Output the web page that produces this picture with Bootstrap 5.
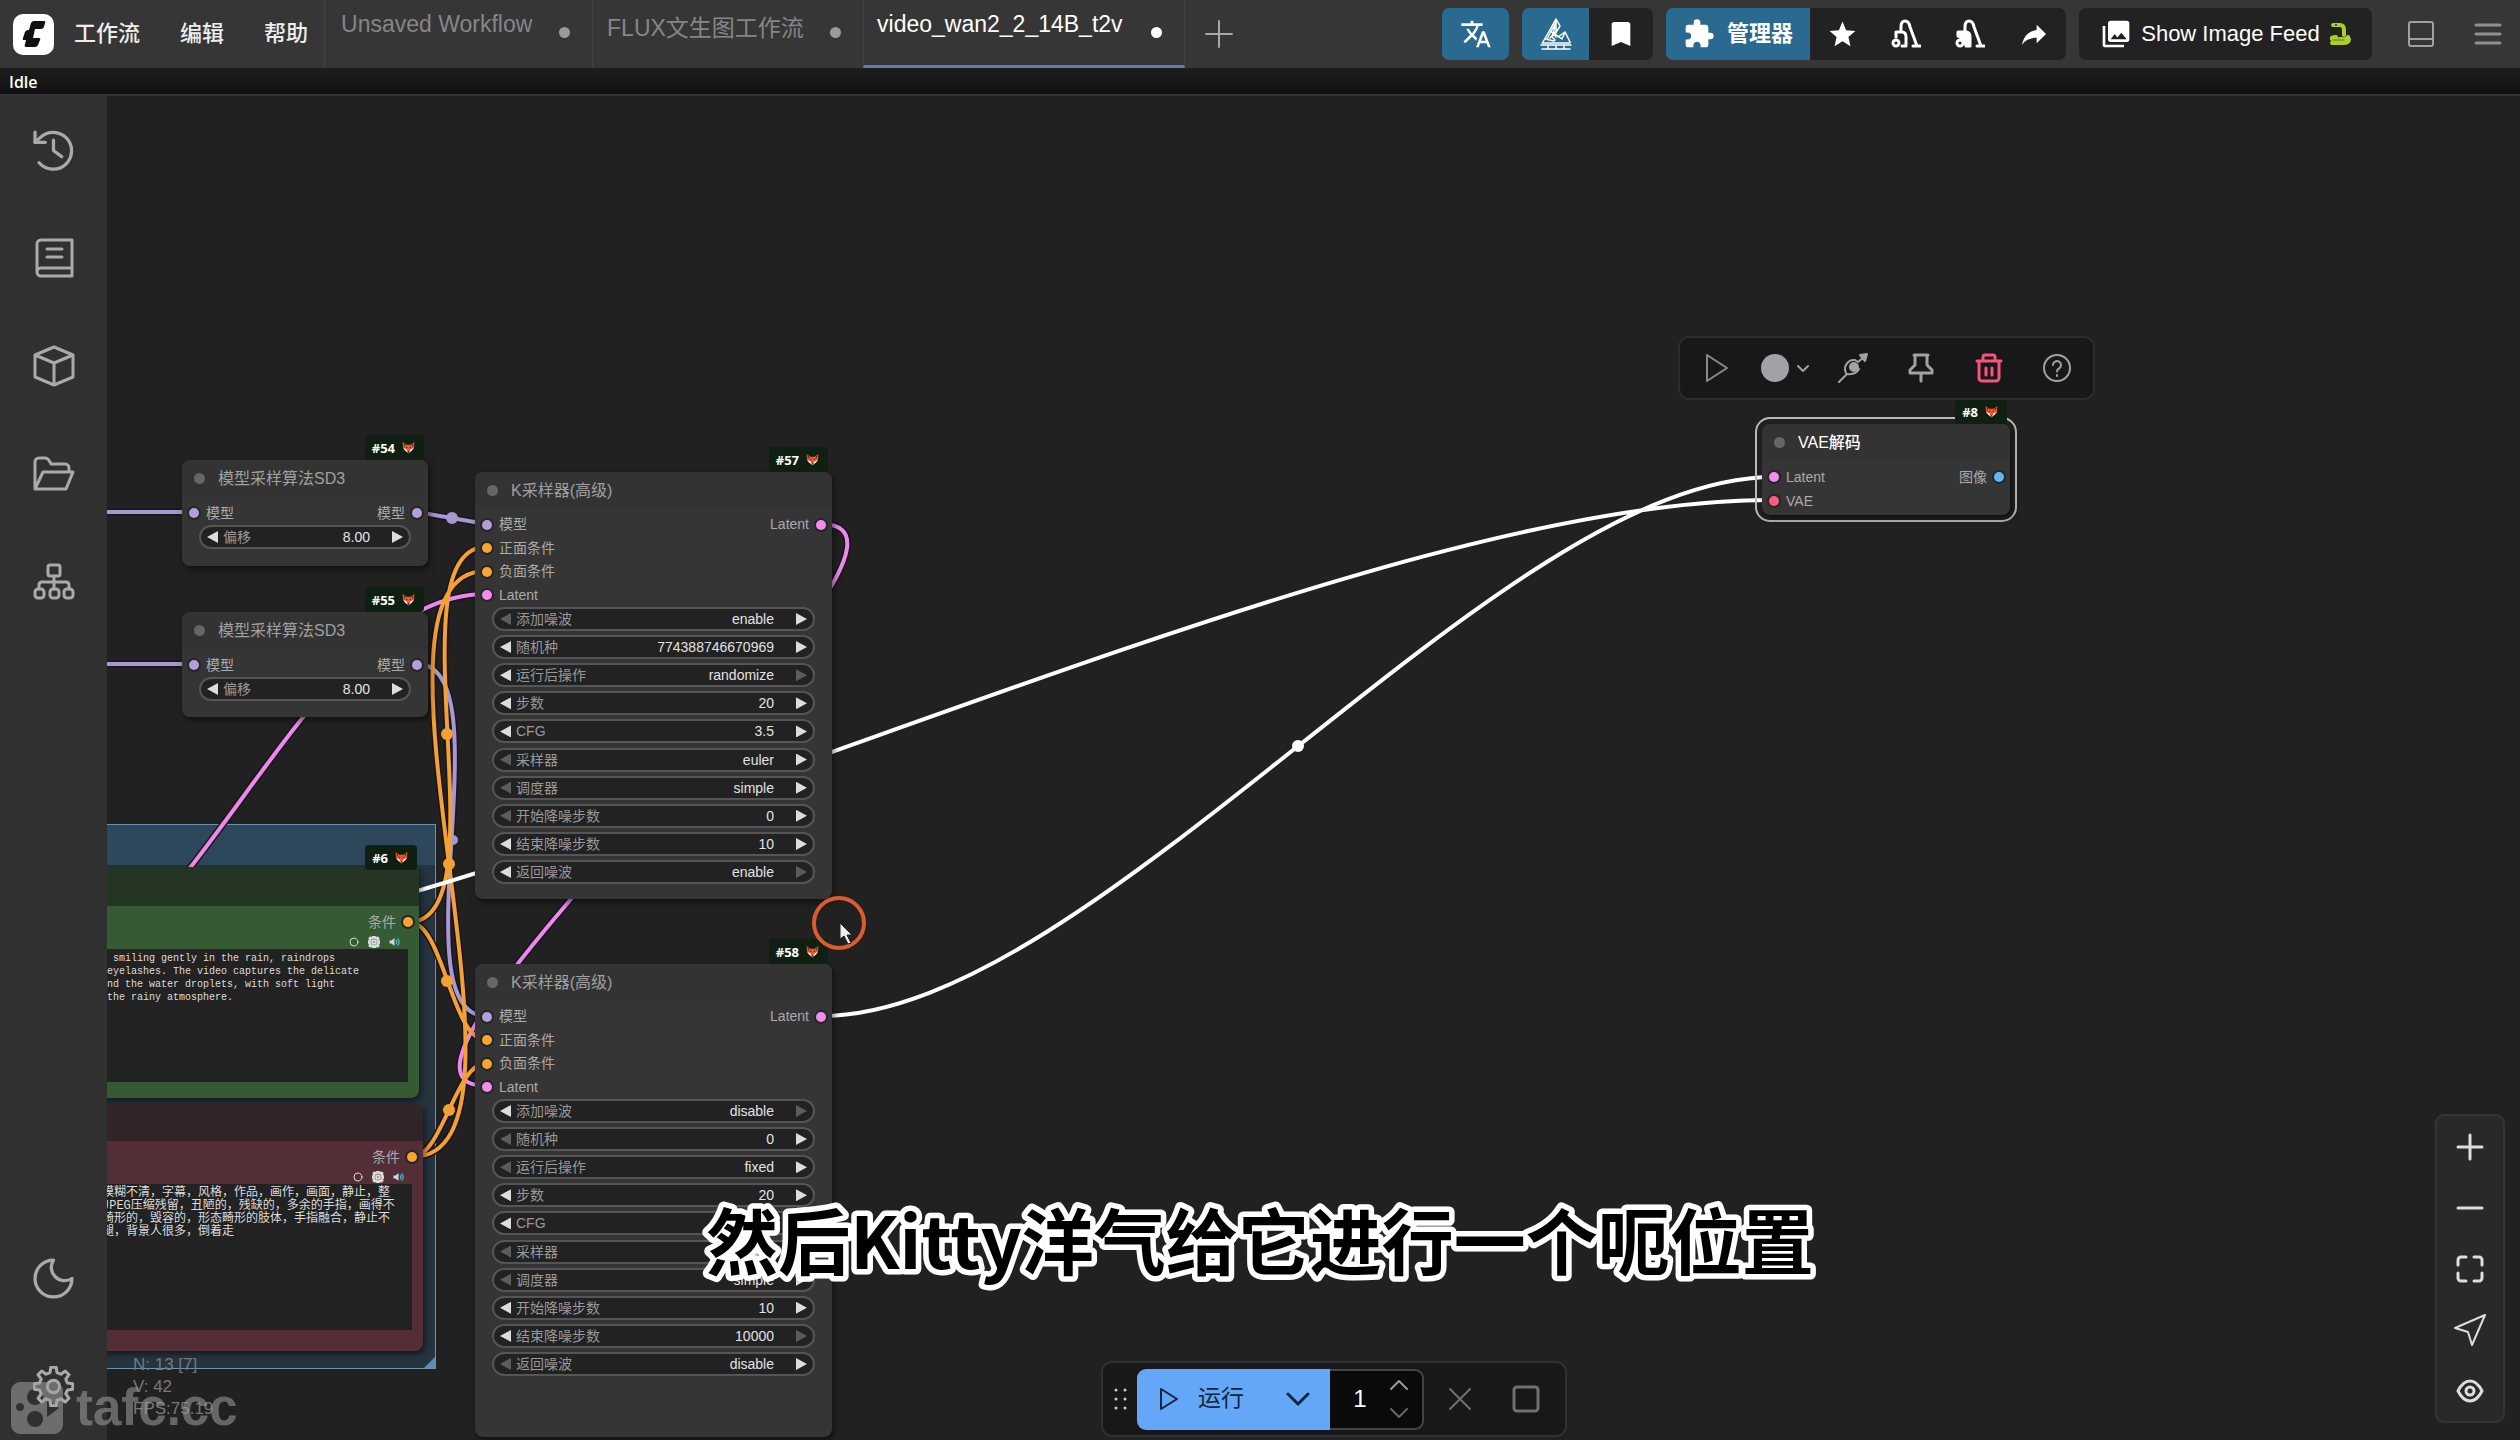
<!DOCTYPE html>
<html lang="zh-CN" data-bs-theme="dark">
<head>
<meta charset="utf-8">
<meta name="viewport" content="width=device-width, initial-scale=1">
<title>ComfyUI</title>
<link href="https://cdn.jsdelivr.net/npm/bootstrap@5.3.0/dist/css/bootstrap.min.css" rel="stylesheet">
<script src="https://cdn.jsdelivr.net/npm/bootstrap@5.3.0/dist/js/bootstrap.bundle.min.js"></script>
<style>
body{background:#212121;color:#ddd;font-family:"Liberation Sans","Noto Sans CJK SC",sans-serif;font-size:14px;line-height:1.2}
button,input,textarea{font-family:inherit;background:none;border:0;padding:0;color:inherit}
svg{display:block;flex:none}
.ico{fill:none;stroke:currentColor;stroke-linecap:round;stroke-linejoin:round}
.sol{fill:currentColor}

/* top bar */
.topbar{height:68px;background:#363637;z-index:5;flex:none}
.menu-link{font-size:22px;color:#eee;text-decoration:none;font-weight:500}
.menu-link+.menu-link{margin-left:40px}
.brand{width:41px;height:41px;background:#fff;border-radius:10px;margin:0 20px 0 13px}
.tabs-row{margin-left:16px}
.tabitem{height:68px;border-left:1px solid #414143;font-size:23px;line-height:28px;color:#868688;text-decoration:none;padding:10px 22px 0 16px}
.tabitem i{width:11px;height:11px;border-radius:50%;background:#9b9b9d;margin:17px 0 0 auto}
.t1{width:268px}
.t2{width:271px;padding:14px 22px 0 14px}
.t2 i{margin-top:13px}
.t3{width:322px;color:#fff;padding-left:13px;border-right:1px solid #414143;border-bottom:3px solid #5f7db5}
.t3 i{background:#fff}
.newtab{margin-left:20px}
.tools{gap:13px}
.tool{height:52px;min-width:64px;background:#222;color:#fff;font-size:22px}
.tool.blue{background:#2a6990;min-width:67px}
.tool.mgr{width:144px;gap:12px}
.feed{width:293px;gap:9px}
.tgroup{border-radius:7px;overflow:hidden}
.panel-btn{margin-left:36px}
.burger{margin:0 18px 0 40px}
.statusline{height:28px;flex:none;background:linear-gradient(#1d1d1d,#111);border-bottom:2px solid #343434;z-index:5;font:600 16px/26px "Open Sans",sans-serif;color:#fff;padding:1px 9px}

/* side bar */
.side{width:107px;background:#303031;z-index:4;color:#aaa}
.side button{height:108px}

/* canvas */
.canvas{z-index:0;overflow:hidden}
.wires{fill:none;stroke-width:4}
.wires .halo{stroke:#1a1420;stroke-width:7}
.grp{left:0;top:824px;width:436px;height:545px;background:#25343f;border:1px solid #6c93ad}
.grp-head{height:40px;background:#2d475b}
.grp-grip{right:0;bottom:0;width:11px;height:11px;background:#5b8db8;clip-path:polygon(100% 0,100% 100%,0 100%)}
.node{background:#353535;border-radius:8px;box-shadow:2px 3px 6px #0008}
.node-title{height:37px;gap:13px;padding:0 12px;font-size:16px;color:#a0a0a0;background:#333;border-radius:8px 8px 0 0}
.node-title::before{content:"";width:11px;height:11px;border-radius:50%;background:#666}
.slots{padding:4px 6px 0 7px}
.slots .ln{height:24px;font-size:14px;color:#aaa;gap:7px}
.dt{width:10px;height:10px;border-radius:50%;box-shadow:0 0 0 2px #262626}
.c-model{background:#b39ddb}.c-cond{background:#f9a42e}.c-lat{background:#f48cf0}.c-vae{background:#ff5a82}.c-img{background:#64b5f6}
.slots4{height:98px}
.wgts{margin:0 17px}
.wgts10{height:277px}
.wgt{height:24px;border:2px solid #555;border-radius:12px;background:#222;padding:0 6px;font-size:14px;line-height:18px}
.wgt label{color:#999;margin-left:5px;white-space:nowrap}
.wgt input{flex:1;min-width:0;width:0;text-align:right;color:#e2e2e2;margin-right:22px;outline:0}
.wgt button{width:11px;height:12px;background:#ddd;flex:none}
.wgt .prev{clip-path:polygon(0 50%,100% 0,100% 100%)}
.wgt .next{clip-path:polygon(0 0,100% 50%,0 100%)}
.wgt .dim{background:#5c5c5c}
.tagid{right:4px;top:-25px;height:25px;padding:0 9px 0 7px;gap:7px;background:#0f1f12;color:#fff;border-radius:4px;font:700 13px/24px "Open Sans",sans-serif}
.n54{left:182px;top:460px;width:246px;height:106px}
.n55{left:182px;top:612px;width:246px;height:105px}
.n57{left:475px;top:472px;width:357px;height:427px}
.n58{left:475px;top:964px;width:357px;height:473px}
.n6{left:0;top:867px;width:419px;height:231px;background:#355a34}
.n6 .node-title{background:#243623;height:39px}
.n6 .tagid{top:-22px;right:2px}
.n7{left:0;top:1104px;width:423px;height:247px;background:#532e36}
.n7 .node-title{background:#322327}
.n6 .node-title::before,.n7 .node-title::before{display:none}
.prompt{background:#222;color:#ddd;resize:none;overflow:hidden;outline:0;font-family:"Liberation Mono","Noto Sans CJK SC",monospace;font-size:10px;line-height:13px;white-space:pre;padding-top:3px}
.prompt-row{padding:2px 11px 0 107px}
.prompt-zh{font-size:12px}
.n7 .prompt-row{padding-left:102px}
.minis{gap:9px;color:#ddd;padding-right:18px;height:11px;margin-top:2px}
.n8wrap{left:1755px;top:417px;width:262px;height:105px;border:2px solid #b8b8b8;border-radius:15px}
.n8{margin:5px;height:91px}
.n8 .node-title{color:#fff;font-weight:500}
.n8wrap .tagid{top:-20px;right:8px}
.selbar{left:1678px;top:336px;width:417px;height:64px;background:#18181b;border:2px solid #2c2c2e;border-radius:11px;color:#a1a1a6}
.selbar button{width:68px;height:60px}
.stats{left:133px;bottom:20px;font-size:17px;line-height:22px;color:#77787a;z-index:6}
.wmark{left:11px;bottom:2px;z-index:7;color:#a0a0a0;opacity:.55;font-weight:700;font-size:51px;line-height:60px;gap:13px}
.zoombar{right:15px;bottom:17px;width:70px;background:#29292c;border:2px solid #353538;border-radius:9px;color:#ddd;z-index:3}
.zoombar button{height:61px}
.runbar{left:1101px;bottom:3px;height:76px;background:#18181b;border:2px solid #303033;border-radius:11px;z-index:3;padding:0 18px 0 10px}
.run{height:61px;background:#64a7f8;color:#12263c;font-size:23px}
.run-a{width:129px;border-radius:9px 0 0 9px;gap:19px}
.run-b{width:64px}
.count{width:94px;height:61px;background:#0a0a0b;border:2px solid #444;border-left:0;border-radius:0 9px 9px 0;color:#fff;font-size:24px}
.count input{width:60px;text-align:center;outline:0}
.stopbtn{margin:0 7px 0 40px}
.caption-line{bottom:144px;height:105px;z-index:8;pointer-events:none}
.caption-line text{font:600 72px "Noto Sans CJK SC",sans-serif;fill:#000;stroke:#fff;stroke-width:11px;stroke-linejoin:round;paint-order:stroke fill}
.pointer{left:812px;top:896px;z-index:8}
</style>
</head>
<body class="vh-100 overflow-hidden position-relative d-flex flex-column">

<svg width="0" height="0" class="position-absolute">
<symbol id="fox" viewBox="0 0 24 24"><path d="M1 2l7 5h8l7-5-1 11-5 5-5 5-5-5-5-5z" fill="#e8562a"/><path d="M2 13l6 2 4 7-6-4zM22 13l-6 2-4 7 6-4z" fill="#fff"/><path d="M3 4l3 3-2 3zM21 4l-3 3 2 3z" fill="#5a2416"/><path d="M7 10l3 2-2 1zM17 10l-3 2 2 1zM10 19h4l-2 3z" fill="#222"/></symbol>
<symbol id="gear" viewBox="0 0 40 40"><path d="M16.600 6.400L17.400 1.200H22.600L23.400 6.400L27.200 8L31.500 4.900L35.100 8.500L32 12.800L33.600 16.600L38.800 17.400V22.600L33.600 23.400L32 27.200L35.100 31.500L31.500 35.100L27.200 32L23.400 33.600L22.600 38.800H17.400L16.600 33.600L12.800 32L8.500 35.100L4.900 31.500L8 27.200L6.400 23.400L1.200 22.600V17.400L6.400 16.600L8 12.800L4.900 8.500L8.500 4.900L12.800 8Z"/><circle cx="20" cy="20" r="6"/></symbol>
<symbol id="spk" viewBox="0 0 24 20"><path d="M1 7h4l6-5v16l-6-5H1z" fill="#cfd8dc"/><path d="M14 6q4 4 0 8M17 3q7 7 0 14" fill="none" stroke="#3fb6c9" stroke-width="2.500"/></symbol>
</svg>

<!-- graph canvas -->
<main class="canvas position-absolute top-0 start-0 w-100 h-100">
  <section class="grp position-absolute"><div class="grp-head"></div><span class="grp-grip position-absolute"></span></section>

  <svg class="wires position-absolute top-0 start-0" width="100%" height="100%">
    <g class="halo">
      <path d="M0 512H193M0 664H193M417 512L486 524M417 664C507 664 396 1016 486 1016M821 524C985 524 322 1086 486 1086M0 1000C190 1000 296 594 486 594M409 922C505 922 390 547 486 547M409 922C444 922 451 1040 486 1040M412 1157C560 1157 338 571 486 571M412 1157C442 1157 456 1063 486 1063"/>
    </g>
    <g stroke="#a898d2" fill="none"><path d="M0 512H193M0 664H193M417 512L486 524M417 664C507 664 396 1016 486 1016"/><circle cx="452" cy="518" r="4" fill="#a898d2"/><circle cx="453" cy="840" r="3" fill="#a898d2"/></g>
    <path stroke="#ec8aea" d="M821 524C985 524 322 1086 486 1086M0 1000C190 1000 296 594 486 594"/>
    <g stroke="#f3a035"><path d="M409 922C505 922 390 547 486 547M409 922C444 922 451 1040 486 1040M412 1157C560 1157 338 571 486 571M412 1157C442 1157 456 1063 486 1063"/>
      <g fill="#f3a035" stroke="none"><circle cx="447" cy="734" r="6"/><circle cx="447" cy="981" r="6"/><circle cx="449" cy="864" r="6"/><circle cx="449" cy="1110" r="6"/></g></g>
    <g stroke="#fff"><path d="M821 1016C1095 1016 1500 477 1774 477M0 970C460 965 1314 498 1774 500"/><circle cx="1298" cy="746" r="6" fill="#fff" stroke="none"/></g>
  </svg>

  <article class="node n6 position-absolute">
    <span class="tagid position-absolute d-flex align-items-center">#6 <svg width="13" height="13"><use href="#fox"/></svg></span>
    <div class="node-title"></div>
    <div class="slots"><div class="ln d-flex align-items-center justify-content-end"><label for="pos">条件</label><span class="dt c-cond"></span></div></div>
    <div class="minis d-flex align-items-center justify-content-end"><svg width="10" height="10" class="ico" stroke-width="1"><circle cx="5" cy="5" r="4"/></svg><svg width="12" height="12" class="ico" stroke-width="7"><use href="#gear"/></svg><svg width="12" height="10"><use href="#spk"/></svg></div>
    <div class="prompt-row"><textarea id="pos" class="prompt d-block w-100" rows="10"> smiling gently in the rain, raindrops
eyelashes. The video captures the delicate
nd the water droplets, with soft light
the rainy atmosphere.</textarea></div>
  </article>

  <article class="node n7 position-absolute">
    <div class="node-title"></div>
    <div class="slots"><div class="ln d-flex align-items-center justify-content-end"><label for="neg">条件</label><span class="dt c-cond"></span></div></div>
    <div class="minis d-flex align-items-center justify-content-end"><svg width="10" height="10" class="ico" stroke-width="1"><circle cx="5" cy="5" r="4"/></svg><svg width="12" height="12" class="ico" stroke-width="7"><use href="#gear"/></svg><svg width="12" height="10"><use href="#spk"/></svg></div>
    <div class="prompt-row"><textarea id="neg" class="prompt prompt-zh d-block w-100" rows="11">模糊不清，字幕，风格，作品，画作，画面，静止，整
JPEG压缩残留，丑陋的，残缺的，多余的手指，画得不
畸形的，毁容的，形态畸形的肢体，手指融合，静止不
腿，背景人很多，倒着走</textarea></div>
  </article>

  <article class="node n54 position-absolute">
    <span class="tagid position-absolute d-flex align-items-center">#54 <svg width="13" height="13"><use href="#fox"/></svg></span>
    <div class="node-title d-flex align-items-center">模型采样算法SD3</div>
    <div class="slots"><div class="ln d-flex align-items-center"><span class="dt c-model"></span>模型<span class="ms-auto">模型</span><span class="dt c-model"></span></div></div>
    <div class="wgts"><div class="wgt d-flex align-items-center"><button class="prev" aria-label="减少"></button><label for="s1">偏移</label><input id="s1" value="8.00"><button class="next" aria-label="增加"></button></div></div>
  </article>

  <article class="node n55 position-absolute">
    <span class="tagid position-absolute d-flex align-items-center">#55 <svg width="13" height="13"><use href="#fox"/></svg></span>
    <div class="node-title d-flex align-items-center">模型采样算法SD3</div>
    <div class="slots"><div class="ln d-flex align-items-center"><span class="dt c-model"></span>模型<span class="ms-auto">模型</span><span class="dt c-model"></span></div></div>
    <div class="wgts"><div class="wgt d-flex align-items-center"><button class="prev" aria-label="减少"></button><label for="s2">偏移</label><input id="s2" value="8.00"><button class="next" aria-label="增加"></button></div></div>
  </article>

  <article class="node n57 position-absolute">
    <span class="tagid position-absolute d-flex align-items-center">#57 <svg width="13" height="13"><use href="#fox"/></svg></span>
    <div class="node-title d-flex align-items-center">K采样器(高级)</div>
    <div class="slots slots4 d-flex flex-column justify-content-between">
      <div class="ln d-flex align-items-center"><span class="dt c-model"></span>模型<span class="ms-auto">Latent</span><span class="dt c-lat"></span></div>
      <div class="ln d-flex align-items-center"><span class="dt c-cond"></span>正面条件</div>
      <div class="ln d-flex align-items-center"><span class="dt c-cond"></span>负面条件</div>
      <div class="ln d-flex align-items-center"><span class="dt c-lat"></span>Latent</div>
    </div>
    <div class="wgts wgts10 d-flex flex-column justify-content-between">
      <div class="wgt d-flex align-items-center"><button class="prev dim" aria-label="上一个"></button><label for="a1">添加噪波</label><input id="a1" value="enable"><button class="next" aria-label="下一个"></button></div>
      <div class="wgt d-flex align-items-center"><button class="prev" aria-label="减少"></button><label for="a2">随机种</label><input id="a2" value="774388746670969"><button class="next" aria-label="增加"></button></div>
      <div class="wgt d-flex align-items-center"><button class="prev" aria-label="上一个"></button><label for="a3">运行后操作</label><input id="a3" value="randomize"><button class="next dim" aria-label="下一个"></button></div>
      <div class="wgt d-flex align-items-center"><button class="prev" aria-label="减少"></button><label for="a4">步数</label><input id="a4" value="20"><button class="next" aria-label="增加"></button></div>
      <div class="wgt d-flex align-items-center"><button class="prev" aria-label="减少"></button><label for="a5">CFG</label><input id="a5" value="3.5"><button class="next" aria-label="增加"></button></div>
      <div class="wgt d-flex align-items-center"><button class="prev dim" aria-label="上一个"></button><label for="a6">采样器</label><input id="a6" value="euler"><button class="next" aria-label="下一个"></button></div>
      <div class="wgt d-flex align-items-center"><button class="prev dim" aria-label="上一个"></button><label for="a7">调度器</label><input id="a7" value="simple"><button class="next" aria-label="下一个"></button></div>
      <div class="wgt d-flex align-items-center"><button class="prev dim" aria-label="减少"></button><label for="a8">开始降噪步数</label><input id="a8" value="0"><button class="next" aria-label="增加"></button></div>
      <div class="wgt d-flex align-items-center"><button class="prev" aria-label="减少"></button><label for="a9">结束降噪步数</label><input id="a9" value="10"><button class="next" aria-label="增加"></button></div>
      <div class="wgt d-flex align-items-center"><button class="prev" aria-label="上一个"></button><label for="a10">返回噪波</label><input id="a10" value="enable"><button class="next dim" aria-label="下一个"></button></div>
    </div>
  </article>

  <article class="node n58 position-absolute">
    <span class="tagid position-absolute d-flex align-items-center">#58 <svg width="13" height="13"><use href="#fox"/></svg></span>
    <div class="node-title d-flex align-items-center">K采样器(高级)</div>
    <div class="slots slots4 d-flex flex-column justify-content-between">
      <div class="ln d-flex align-items-center"><span class="dt c-model"></span>模型<span class="ms-auto">Latent</span><span class="dt c-lat"></span></div>
      <div class="ln d-flex align-items-center"><span class="dt c-cond"></span>正面条件</div>
      <div class="ln d-flex align-items-center"><span class="dt c-cond"></span>负面条件</div>
      <div class="ln d-flex align-items-center"><span class="dt c-lat"></span>Latent</div>
    </div>
    <div class="wgts wgts10 d-flex flex-column justify-content-between">
      <div class="wgt d-flex align-items-center"><button class="prev" aria-label="上一个"></button><label for="b1">添加噪波</label><input id="b1" value="disable"><button class="next dim" aria-label="下一个"></button></div>
      <div class="wgt d-flex align-items-center"><button class="prev dim" aria-label="减少"></button><label for="b2">随机种</label><input id="b2" value="0"><button class="next" aria-label="增加"></button></div>
      <div class="wgt d-flex align-items-center"><button class="prev dim" aria-label="上一个"></button><label for="b3">运行后操作</label><input id="b3" value="fixed"><button class="next" aria-label="下一个"></button></div>
      <div class="wgt d-flex align-items-center"><button class="prev" aria-label="减少"></button><label for="b4">步数</label><input id="b4" value="20"><button class="next" aria-label="增加"></button></div>
      <div class="wgt d-flex align-items-center"><button class="prev" aria-label="减少"></button><label for="b5">CFG</label><input id="b5" value="3.5"><button class="next" aria-label="增加"></button></div>
      <div class="wgt d-flex align-items-center"><button class="prev dim" aria-label="上一个"></button><label for="b6">采样器</label><input id="b6" value="euler"><button class="next" aria-label="下一个"></button></div>
      <div class="wgt d-flex align-items-center"><button class="prev dim" aria-label="上一个"></button><label for="b7">调度器</label><input id="b7" value="simple"><button class="next" aria-label="下一个"></button></div>
      <div class="wgt d-flex align-items-center"><button class="prev" aria-label="减少"></button><label for="b8">开始降噪步数</label><input id="b8" value="10"><button class="next" aria-label="增加"></button></div>
      <div class="wgt d-flex align-items-center"><button class="prev" aria-label="减少"></button><label for="b9">结束降噪步数</label><input id="b9" value="10000"><button class="next dim" aria-label="增加"></button></div>
      <div class="wgt d-flex align-items-center"><button class="prev dim" aria-label="上一个"></button><label for="b10">返回噪波</label><input id="b10" value="disable"><button class="next" aria-label="下一个"></button></div>
    </div>
  </article>

  <article class="n8wrap position-absolute">
    <div class="node n8">
      <div class="node-title d-flex align-items-center">VAE解码</div>
      <div class="slots">
        <div class="ln d-flex align-items-center"><span class="dt c-lat"></span>Latent<span class="ms-auto">图像</span><span class="dt c-img"></span></div>
        <div class="ln d-flex align-items-center"><span class="dt c-vae"></span>VAE</div>
      </div>
    </div>
    <span class="tagid position-absolute d-flex align-items-center">#8 <svg width="13" height="13"><use href="#fox"/></svg></span>
  </article>

  <div class="selbar position-absolute d-flex align-items-center justify-content-center" role="toolbar">
    <button class="d-flex align-items-center justify-content-center" aria-label="执行"><svg width="26" height="28" class="ico" stroke-width="2" color="#8a8a8e"><path d="M3 1V27L23 14Z"/></svg></button>
    <button class="d-flex align-items-center justify-content-center gap-2" aria-label="颜色"><svg width="28" height="28" class="sol"><circle cx="14" cy="14" r="14"/></svg><svg width="12" height="12" class="ico" stroke-width="2"><path d="M1 4l5 5 5-5"/></svg></button>
    <button class="d-flex align-items-center justify-content-center" aria-label="连接"><svg width="30" height="30" class="ico" stroke-width="2"><path d="M1 29L9 21M8 20A9 9 0 0 1 17 7L20 9 26 4"/><path d="M22 2l7-1-2 7z" fill="currentColor"/><circle cx="16" cy="14" r="4" fill="currentColor"/><path d="M9 21q9 1 12-5"/></svg></button>
    <button class="d-flex align-items-center justify-content-center" aria-label="固定"><svg width="28" height="30" class="ico" stroke-width="3"><path d="M7 2H21M8 2V12L3 17V20H25V17L20 12V2M14 20V28"/></svg></button>
    <button class="d-flex align-items-center justify-content-center" aria-label="删除"><svg width="28" height="30" class="ico" stroke-width="3" color="#f4567c"><path d="M2 8H26M4 8V25a3 3 0 0 0 3 3H21a3 3 0 0 0 3-3V8M8 8V4a2 2 0 0 1 2-2h8a2 2 0 0 1 2 2V8M11 15V22M17 15V22"/></svg></button>
    <button class="d-flex align-items-center justify-content-center" aria-label="帮助"><svg width="28" height="28" class="ico" stroke-width="2"><circle cx="14" cy="14" r="13"/><path d="M10 11a4 4 0 1 1 6 3.500q-2 1-2 3M14 21v1"/></svg></button>
  </div>
</main>

<!-- top bar -->
<header class="topbar d-flex align-items-center position-relative">
  <nav class="d-flex align-items-center h-100">
    <span class="brand d-flex align-items-center justify-content-center"><svg width="26" height="30" class="sol" color="#111"><path d="M10 4q1-2 3-2h10q2 0 1 2l-1 4q-1 2-3 2h-6l-2 9h6q2 0 1 2l-2 5q-1 2-3 2H5q-2 0-1-3l1-4H3q-2 0-1-2l2-6q1-2 3-2h1z"/></svg></span>
    <a class="menu-link" href="#">工作流</a><a class="menu-link" href="#">编辑</a><a class="menu-link" href="#">帮助</a>
  </nav>
  <nav class="d-flex tabs-row">
    <a class="tabitem t1 d-flex" href="#"><span>Unsaved Workflow</span><i></i></a>
    <a class="tabitem t2 d-flex" href="#"><span>FLUX文生图工作流</span><i></i></a>
    <a class="tabitem t3 d-flex" href="#"><span>video_wan2_2_14B_t2v</span><i></i></a>
  </nav>
  <button class="newtab" aria-label="新建"><svg width="28" height="28" class="ico" stroke-width="2" color="#a8a8a8"><path d="M14 1V27M1 14H27"/></svg></button>
  <div class="d-flex align-items-center ms-auto tools">
    <div class="tgroup d-flex"><button class="tool blue d-flex align-items-center justify-content-center" aria-label="翻译"><svg width="32" height="32" viewBox="0 0 24 24" class="sol"><path d="M12.870,15.070L10.330,12.560L10.360,12.530C12.100,10.590 13.340,8.360 14.070,6H17V4H10V2H8V4H1V6H12.170C11.500,7.920 10.440,9.750 9,11.350C8.070,10.320 7.300,9.190 6.690,8H4.690C5.420,9.630 6.420,11.170 7.670,12.560L2.580,17.580L4,19L9,14L12.110,17.110L12.870,15.070M18.500,10H16.500L12,22H14L15.120,19H19.870L21,22H23L18.500,10M15.880,17L17.500,12.670L19.120,17H15.880Z"/></svg></button></div>
    <div class="tgroup d-flex"><button class="tool blue d-flex align-items-center justify-content-center" aria-label="Crystools"><svg width="32" height="34" class="ico" stroke-width="1.500"><path d="M1 28H31M2 32H30M8 28V32M16 28V32M24 28V32M2 26H30M3 25L16 2 20 9M7 22L16 5 12 20 15 23M5 22L14 24M11 14L16 20M16 3V14L10 21M20 9L15 17 22 22M22 22L25 15 30 25M25 15L18 20"/></svg></button><button class="tool d-flex align-items-center justify-content-center" aria-label="书签"><svg width="32" height="32" viewBox="0 0 24 24" class="sol"><path d="M17,3H7A2,2 0 0,0 5,5V21L12,18L19,21V5C19,3.890 18.100,3 17,3Z"/></svg></button></div>
    <div class="tgroup d-flex">
      <button class="tool blue mgr d-flex align-items-center justify-content-center fw-bold"><svg width="32" height="32" viewBox="0 0 24 24" class="sol"><path d="M20.500,11H19V7C19,5.890 18.100,5 17,5H13V3.500A2.500,2.500 0 0,0 10.500,1A2.500,2.500 0 0,0 8,3.500V5H4A2,2 0 0,0 2,7V10.800H3.500C5,10.800 6.200,12 6.200,13.500C6.200,15 5,16.200 3.500,16.200H2V20A2,2 0 0,0 4,22H7.800V20.500C7.800,19 9,17.800 10.500,17.800C12,17.800 13.200,19 13.200,20.500V22H17A2,2 0 0,0 19,20V16H20.500A2.500,2.500 0 0,0 23,13.500A2.500,2.500 0 0,0 20.500,11Z"/></svg>管理器</button>
      <button class="tool d-flex align-items-center justify-content-center" aria-label="收藏"><svg width="31" height="31" viewBox="0 0 24 24" class="sol"><path d="M12,17.270L18.180,21L16.540,13.970L22,9.240L14.810,8.620L12,2L9.190,8.620L2,9.240L7.450,13.970L5.820,21L12,17.270Z"/></svg></button>
      <button class="tool d-flex align-items-center justify-content-center" aria-label="卸载模型"><svg width="30" height="30" class="ico" stroke-width="3"><path d="M5 18V13H10V8Q10 2 14 2T19 8L26 27M22 27H29M5 13H11Q15 13 15 18V27H11"/><circle cx="5" cy="24" r="3"/></svg></button>
      <button class="tool d-flex align-items-center justify-content-center" aria-label="释放缓存"><svg width="30" height="30" class="ico" stroke-width="3"><path d="M10 12V8Q10 2 14 2T19 8L26 27M22 27H29"/><path d="M3 17V13H11Q15 13 15 18V27H11Q10 19 3 17Z" fill="currentColor"/><circle cx="5" cy="24" r="3"/></svg></button>
      <button class="tool d-flex align-items-center justify-content-center" aria-label="分享"><svg width="32" height="32" viewBox="0 0 24 24" class="sol"><path d="M21,12L14,5V9C7,10 4,15 3,20C5.500,16.500 9,14.900 14,14.900V19L21,12Z"/></svg></button>
    </div>
    <div class="tgroup d-flex"><button class="tool feed d-flex align-items-center justify-content-center"><svg width="32" height="32" viewBox="0 0 24 24" class="sol"><path d="M22,16V4A2,2 0 0,0 20,2H8A2,2 0 0,0 6,4V16A2,2 0 0,0 8,18H20A2,2 0 0,0 22,16M11,12L13.030,14.710L16,11L20,16H8M2,6V20A2,2 0 0,0 4,22H18V20H4V6"/></svg>Show Image Feed<svg width="22" height="24" class="ico" stroke-width="4" color="#a8cf2a"><path d="M4 3H11Q15 3 15 8V13M7 15Q2 15 3 17T12 17Q18 18 19 15M3 21H14Q20 21 20 17"/><path d="M4 18H15" stroke="#5f7d12" stroke-width="1"/><circle cx="7" cy="3" r="1" fill="#333" stroke="none"/></svg></button></div>
  </div>
  <button class="panel-btn" aria-label="面板"><svg width="26" height="26" class="ico" stroke-width="2" color="#a0a0a2"><rect x="1" y="1" width="24" height="24" rx="2"/><path d="M1 18H25"/></svg></button>
  <button class="burger" aria-label="菜单"><svg width="28" height="22" class="ico" stroke-width="3" color="#909092"><path d="M2 2H26M2 11H26M2 20H26"/></svg></button>
</header>
<div class="statusline position-relative">Idle</div>

<!-- side bar -->
<aside class="side flex-grow-1 position-relative d-flex flex-column">
  <button class="d-flex align-items-center justify-content-center" aria-label="队列"><svg width="41" height="41" viewBox="2 2 20 20" class="ico" stroke-width="1.600"><path d="M5 18a9 9 0 1 0 .500-12.300L3 8"/><path d="M3 3v5h5M12 7v5l4 3"/></svg></button>
  <button class="d-flex align-items-center justify-content-center" aria-label="节点库"><svg width="40" height="40" class="ico" stroke-width="3"><path d="M38 30V2H7a4 4 0 0 0-4 4V34a4 4 0 0 0 4 4H38V30H7a4 4 0 0 0-4 4M13 11H28M13 19H28"/></svg></button>
  <button class="d-flex align-items-center justify-content-center" aria-label="模型库"><svg width="42" height="42" class="ico" stroke-width="3"><path d="M21 2L40 10V32L21 40 2 32V10ZM2 10L21 18 40 10M21 18V40"/></svg></button>
  <button class="d-flex align-items-center justify-content-center" aria-label="工作流"><svg width="42" height="38" class="ico" stroke-width="3"><path d="M2 34V7a4 4 0 0 1 4-4h6q3 0 5 4l1 2h14a4 4 0 0 1 4 4v4M2 34L10 17H40L33 34Z"/></svg></button>
  <button class="d-flex align-items-center justify-content-center" aria-label="节点图"><svg width="42" height="38" class="ico" stroke-width="3"><rect x="15" y="2" width="12" height="11" rx="2"/><rect x="2" y="26" width="9" height="9" rx="3"/><rect x="17" y="26" width="9" height="9" rx="3"/><rect x="31" y="26" width="9" height="9" rx="3"/><path d="M21 13V26M6 26V22Q6 19 9 19H33Q36 19 36 22V26"/></svg></button>
  <button class="d-flex align-items-center justify-content-center mt-auto" aria-label="主题"><svg width="41" height="41" viewBox="2 2 20 20" class="ico" stroke-width="1.600"><path d="M12 3a6.500 6.500 0 0 0 9 9 9 9 0 1 1-9-9Z"/></svg></button>
  <button class="d-flex align-items-center justify-content-center" aria-label="设置"><svg width="41" height="41" class="ico" stroke-width="3"><use href="#gear"/></svg></button>
</aside>

<div class="stats position-absolute">N: 13 [7]<br>V: 42<br>FPS:75.19</div>
<div class="wmark position-absolute d-flex align-items-center"><svg width="52" height="52"><path fill="#a0a0a0" fill-rule="evenodd" d="M9 0H43a9 9 0 0 1 9 9V43a9 9 0 0 1-9 9H9a9 9 0 0 1-9-9V9a9 9 0 0 1 9-9zM24 7a8 8 0 1 0 .1 0zM9 21a4 4 0 1 0 .1 0zM24 29a8 8 0 1 0 .1 0zM36 17L48 26 36 35z"/></svg>tafc.cc</div>

<!-- view controls -->
<div class="zoombar position-absolute d-flex flex-column" role="toolbar">
  <button class="d-flex align-items-center justify-content-center" aria-label="放大"><svg width="28" height="28" class="ico" stroke-width="3"><path d="M14 2V26M2 14H26"/></svg></button>
  <button class="d-flex align-items-center justify-content-center" aria-label="缩小"><svg width="28" height="28" class="ico" stroke-width="3"><path d="M2 14H26"/></svg></button>
  <button class="d-flex align-items-center justify-content-center" aria-label="适应视图"><svg width="28" height="28" class="ico" stroke-width="3"><path d="M2 10V5a3 3 0 0 1 3-3h5M18 2h5a3 3 0 0 1 3 3v5M26 18v5a3 3 0 0 1-3 3h-5M10 26H5a3 3 0 0 1-3-3v-5"/></svg></button>
  <button class="d-flex align-items-center justify-content-center" aria-label="选择模式"><svg width="32" height="32" class="ico" stroke-width="2"><path d="M1 14L31 1 18 31 14 18Z"/></svg></button>
  <button class="d-flex align-items-center justify-content-center" aria-label="连线可见"><svg width="28" height="24" class="ico" stroke-width="3"><path d="M2 12Q7 2 14 2T26 12Q21 22 14 22T2 12Z"/><circle cx="14" cy="12" r="4"/></svg></button>
</div>

<!-- queue bar -->
<div class="runbar position-absolute d-flex align-items-center">
  <svg width="16" height="28" class="sol me-2" color="#ccc"><circle cx="3" cy="5" r="1.500"/><circle cx="12" cy="5" r="1.500"/><circle cx="3" cy="14" r="1.500"/><circle cx="12" cy="14" r="1.500"/><circle cx="3" cy="23" r="1.500"/><circle cx="12" cy="23" r="1.500"/></svg>
  <button class="run run-a d-flex align-items-center justify-content-center"><svg width="20" height="24" class="ico" stroke-width="2"><path d="M2 2V22L18 12Z"/></svg>运行</button>
  <button class="run run-b d-flex align-items-center justify-content-center" aria-label="更多"><svg width="24" height="14" class="ico" stroke-width="3"><path d="M2 2L12 12 22 2"/></svg></button>
  <div class="count d-flex align-items-center"><input value="1" aria-label="批次数量"><div class="d-flex flex-column gap-3"><button class="d-block" aria-label="增加"><svg width="18" height="12" class="ico" stroke-width="2" color="#999"><path d="M1 10L9 2 17 10"/></svg></button><button class="d-block" aria-label="减少"><svg width="18" height="12" class="ico" stroke-width="2" color="#666"><path d="M1 2L9 10 17 2"/></svg></button></div></div>
  <button class="ms-4" aria-label="取消"><svg width="24" height="24" class="ico" stroke-width="2" color="#707072"><path d="M2 2L22 22M22 2L2 22"/></svg></button>
  <button class="stopbtn" aria-label="停止"><svg width="28" height="28" class="ico" stroke-width="3" color="#707072"><rect x="2" y="2" width="24" height="24" rx="3"/></svg></button>
</div>

<svg class="pointer position-absolute" width="54" height="54"><circle cx="27" cy="27" r="25" fill="none" stroke="#dc5c2e" stroke-width="4"/><path d="M28 27V43L32 40 36 48 39 47 35 39H40Z" fill="#eee" stroke="#222" stroke-width="1"/></svg>
<svg class="caption-line position-absolute start-0 w-100"><text x="50%" y="78" text-anchor="middle">然后Kitty洋气给它进行一个呃位置</text></svg>
</body>
</html>
